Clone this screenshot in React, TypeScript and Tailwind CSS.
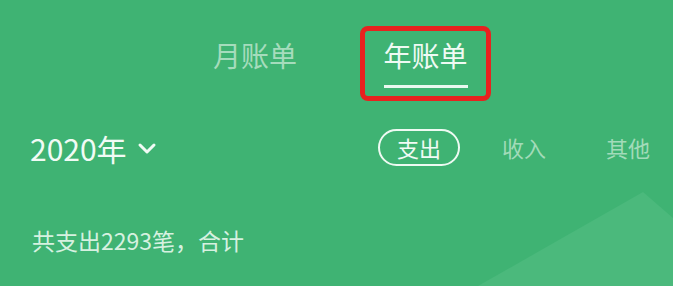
import React from "react";

export default function App() {
  return (
    <div
      className="relative w-[673px] h-[286px] overflow-hidden bg-[#3fb373] text-white"
      style={{ fontFamily: '"Noto Sans CJK SC", "Noto Sans", sans-serif' }}
    >
      <svg className="absolute inset-0" width="673" height="286" viewBox="0 0 673 286">
        <polygon points="478,286 643,192 673,218 673,286" fill="#4bb97c" />
      </svg>
      <div className="relative flex flex-col">
        <div className="flex h-[100px] items-start pt-[26px]">
          <div className="ml-[213px] mt-[9px] text-[28px] leading-[40px] text-[#a5dcbc]">月账单</div>
          <div className="ml-[63px] flex h-[75px] w-[131px] flex-col items-center rounded-[8px] border-[5px] border-[#e8221f] pt-[4px]">
            <div className="text-[28px] leading-[40px] text-[#effaf3]">年账单</div>
            <div className="mt-[10px] h-[3px] w-[84px] bg-[#e9f8ef]" />
          </div>
        </div>
        <div className="flex h-[95px] items-center">
          <div className="ml-[30px] flex items-center text-[30px] leading-[36px] text-[#f1fbf5]">
            <span>2020年</span>
            <svg className="ml-[10px]" width="20" height="14" viewBox="0 0 20 14">
              <polyline points="3,4 10,11 17,4" fill="none" stroke="#f1fbf5" strokeWidth="3" strokeLinecap="round" strokeLinejoin="round" />
            </svg>
          </div>
          <div className="ml-auto mr-[23px] flex items-center">
            <div className="flex h-[37px] w-[82px] items-center justify-center rounded-full border-2 border-[#eefaf2] text-[22px] text-[#f1fbf5]">
              支出
            </div>
            <div className="ml-[42px] text-[22px] text-[#a2dbb9]">收入</div>
            <div className="ml-[60px] text-[22px] text-[#a2dbb9]">其他</div>
          </div>
        </div>
        <div className="ml-[32px] mt-[31px] text-[23px] leading-[28px] text-[#d6f1e0]">共支出2293笔，合计</div>
      </div>
    </div>
  );
}
